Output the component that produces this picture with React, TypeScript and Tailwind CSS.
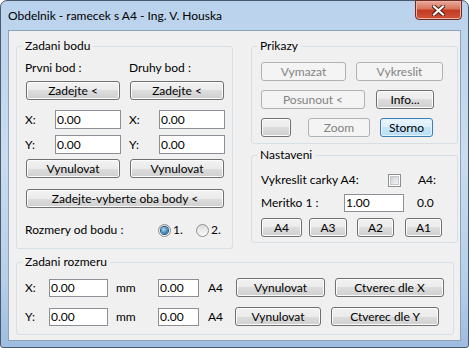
import React from 'react';

type BtnProps = { children?: React.ReactNode; className?: string; variant?: 'normal' | 'disabled' | 'default' };

const Btn: React.FC<BtnProps> = ({ children, className = '', variant = 'normal' }) => {
  const look =
    variant === 'disabled'
      ? 'border-[#adb2b5] bg-[#f4f4f4] text-[#838383]'
      : variant === 'default'
        ? 'border-[#3c7fb1] bg-[linear-gradient(#eaf5fc,#d9eefb_50%,#c6e5f8_50%,#b9dff6)] shadow-[inset_0_0_0_1px_#e4f3fd] text-black'
        : 'border-[#707070] bg-[linear-gradient(#f2f2f2,#ebebeb_50%,#dddddd_50%,#cfcfcf)] shadow-[inset_0_0_0_1px_#fcfcfc] text-black';
  return (
    <div className={`flex h-[19px] shrink-0 items-center justify-center rounded-[3px] border ${look} ${className}`}>
      {children}
    </div>
  );
};

const Field: React.FC<{ value: string; className?: string }> = ({ value, className = '' }) => (
  <div className={`flex shrink-0 items-center border border-[#8c9096] bg-white pl-[1px] ${className}`}>{value}</div>
);

const Group: React.FC<{ title: string; className?: string; children?: React.ReactNode }> = ({ title, className = '', children }) => (
  <div className={`relative shrink-0 rounded-[3px] border border-[#d5dfe5] ${className}`}>
    <span className="absolute left-[5px] top-[-8px] bg-[#f0f0f0] px-[3px] leading-[14px]">{title}</span>
    {children}
  </div>
);

const Radio: React.FC<{ checked?: boolean }> = ({ checked }) => (
  <div className="flex h-[13px] w-[13px] shrink-0 items-center justify-center rounded-full border border-[#8e8f8f] bg-[linear-gradient(#dcdcdc,#fbfbfb)]">
    {checked && <div className="h-[7px] w-[7px] rounded-full bg-[radial-gradient(circle_at_40%_35%,#a9dcfa,#2a6aa0_75%)] shadow-[0_0_0_1px_#1c5180]" />}
  </div>
);

const App: React.FC = () => {
  return (
    <div className="h-[348px] w-[469px] overflow-hidden bg-white font-['Lato',sans-serif] text-[12px] leading-[14px] text-black">
      <div className="relative flex h-[348px] w-[469px] flex-col rounded-t-[7px] rounded-b-[3px] border border-[#4a5a6e] bg-[linear-gradient(180deg,#bad2ec,#c9dcf0_45%,#b7cfe9_80%,#9fbde0)]">
        {/* title bar */}
        <div className="flex h-[29px] items-center pl-[7px]">Obdelnik - ramecek s A4 - Ing. V. Houska</div>
        <div className="absolute right-[6px] top-[-1px] flex h-[20px] w-[47px] items-center justify-center rounded-b-[4px] border border-[#6b2c24] bg-[linear-gradient(#e9a99a,#d9725c_45%,#c2391f_50%,#d0553a)] shadow-[inset_0_0_0_1px_#eeb3a6]">
          <svg width="13" height="11" viewBox="0 0 13 11">
            <path d="M2 1.5 L11 9.5 M11 1.5 L2 9.5" stroke="#4a1a12" strokeWidth="4" strokeLinecap="square" />
            <path d="M2 1.5 L11 9.5 M11 1.5 L2 9.5" stroke="#ffffff" strokeWidth="2.2" strokeLinecap="square" />
          </svg>
        </div>

        {/* client area */}
        <div className="ml-[7px] flex h-[311px] w-[453px] flex-col border border-[#8ea2ba] bg-[#f0f0f0]">
          <div className="mt-[15px] flex">
            {/* Zadani bodu */}
            <Group title="Zadani bodu" className="ml-[7px] h-[203px] w-[217px]">
              <div className="flex flex-col pl-[8px]">
                <div className="mt-[14px] grid h-[14px] grid-cols-[104px_104px]">
                  <span>Prvni bod :</span>
                  <span>Druhy bod :</span>
                </div>
                <div className="mt-[6px] grid grid-cols-[104px_104px]">
                  <Btn className="ml-[1px] w-[94px]">Zadejte &lt;</Btn>
                  <Btn className="ml-[1px] w-[94px]">Zadejte &lt;</Btn>
                </div>
                <div className="mt-[10px] grid grid-cols-[104px_104px]">
                  <div className="flex items-center">
                    <span className="w-[30px]">X:</span>
                    <Field value="0.00" className="h-[19px] w-[66px]" />
                  </div>
                  <div className="flex items-center">
                    <span className="w-[30px]">X:</span>
                    <Field value="0.00" className="h-[19px] w-[66px]" />
                  </div>
                </div>
                <div className="mt-[6px] grid grid-cols-[104px_104px]">
                  <div className="flex items-center">
                    <span className="w-[30px]">Y:</span>
                    <Field value="0.00" className="h-[19px] w-[66px]" />
                  </div>
                  <div className="flex items-center">
                    <span className="w-[30px]">Y:</span>
                    <Field value="0.00" className="h-[19px] w-[66px]" />
                  </div>
                </div>
                <div className="mt-[5px] grid grid-cols-[104px_104px]">
                  <Btn className="ml-[1px] w-[94px]">Vynulovat</Btn>
                  <Btn className="ml-[1px] w-[94px]">Vynulovat</Btn>
                </div>
                <Btn className="mt-[11px] ml-[1px] w-[198px]">Zadejte-vyberte oba body &lt;</Btn>
                <div className="mt-[15px] flex h-[14px] items-center">
                  <span className="w-[133px]">Rozmery od bodu :</span>
                  <Radio checked />
                  <span className="ml-[2px] w-[23px]">1.</span>
                  <Radio />
                  <span className="ml-[2px]">2.</span>
                </div>
              </div>
            </Group>

            <div className="ml-[18px] flex w-[207px] flex-col">
              {/* Prikazy */}
              <Group title="Prikazy" className="h-[98px] w-[207px]">
                <div className="flex flex-col pl-[9px]">
                  <div className="mt-[15px] flex">
                    <Btn variant="disabled" className="w-[85px]">Vymazat</Btn>
                    <Btn variant="disabled" className="ml-[10px] w-[87px]">Vykreslit</Btn>
                  </div>
                  <div className="mt-[9px] flex">
                    <Btn variant="disabled" className="w-[104px]">Posunout &lt;</Btn>
                    <Btn className="ml-[11px] w-[58px]">Info...</Btn>
                  </div>
                  <div className="mt-[9px] flex">
                    <Btn className="w-[30px]" />
                    <Btn variant="disabled" className="ml-[17px] w-[62px]">Zoom</Btn>
                    <Btn variant="default" className="ml-[10px] w-[53px]">Storno</Btn>
                  </div>
                </div>
              </Group>

              {/* Nastaveni */}
              <Group title="Nastaveni" className="mt-[11px] h-[88px] w-[207px]">
                <div className="flex flex-col pl-[9px]">
                  <div className="mt-[17px] flex h-[14px] items-center">
                    <span className="w-[127px]">Vykreslit carky A4:</span>
                    <div className="flex h-[13px] w-[13px] shrink-0 items-center justify-center border border-[#8e8f8f] bg-white">
                      <div className="h-[9px] w-[9px] border border-[#c4c7cb] bg-[linear-gradient(135deg,#cdd0d4,#f4f4f4)]" />
                    </div>
                    <span className="ml-[17px]">A4:</span>
                  </div>
                  <div className="mt-[7px] flex h-[18px] items-center">
                    <span className="w-[83px]">Meritko 1 :</span>
                    <Field value="1.00" className="h-[18px] w-[60px]" />
                    <span className="ml-[13px]">0.0</span>
                  </div>
                  <div className="mt-[6px] flex">
                    <Btn className="w-[41px]">A4</Btn>
                    <Btn className="ml-[7px] w-[38px]">A3</Btn>
                    <Btn className="ml-[10px] w-[37px]">A2</Btn>
                    <Btn className="ml-[11px] w-[37px]">A1</Btn>
                  </div>
                </div>
              </Group>
            </div>
          </div>

          {/* Zadani rozmeru */}
          <Group title="Zadani rozmeru" className="mt-[13px] ml-[7px] h-[73px] w-[438px]">
            <div className="flex flex-col pl-[8px]">
              <div className="mt-[15px] flex h-[19px] items-center">
                <span className="w-[24px]">X:</span>
                <Field value="0.00" className="h-[18px] w-[59px]" />
                <span className="ml-[8px] w-[34px]">mm</span>
                <Field value="0.00" className="ml-[8px] h-[18px] w-[41px]" />
                <span className="ml-[9px] w-[28px]">A4</span>
                <Btn className="w-[89px]">Vynulovat</Btn>
                <Btn className="ml-[10px] w-[109px]">Ctverec dle X</Btn>
              </div>
              <div className="mt-[10px] flex h-[19px] items-center">
                <span className="w-[24px]">Y:</span>
                <Field value="0.00" className="h-[18px] w-[59px]" />
                <span className="ml-[8px] w-[34px]">mm</span>
                <Field value="0.00" className="ml-[8px] h-[18px] w-[41px]" />
                <span className="ml-[9px] w-[27px]">A4</span>
                <Btn className="w-[86px]">Vynulovat</Btn>
                <Btn className="ml-[10px] w-[108px]">Ctverec dle Y</Btn>
              </div>
            </div>
          </Group>
        </div>
      </div>
    </div>
  );
};

export default App;
